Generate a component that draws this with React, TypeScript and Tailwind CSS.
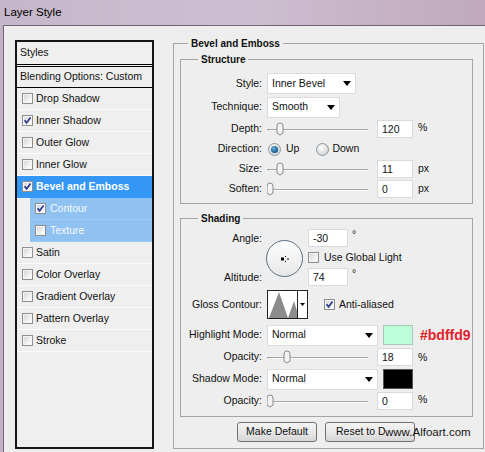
import React from 'react';

const Check: React.FC<{ checked?: boolean }> = ({ checked }) => (
    <svg width="11" height="11" viewBox="0 0 11 11" className="shrink-0">
        <defs>
            <linearGradient id="cbg" x1="0" y1="0" x2="1" y2="1">
                <stop offset="0" stopColor="#d8d8d8" />
                <stop offset="1" stopColor="#ffffff" />
            </linearGradient>
        </defs>
        <rect x="0.5" y="0.5" width="10" height="10" fill="#f4f4f4" stroke="#8e8f8f" />
        <rect x="2" y="2" width="7" height="7" fill="url(#cbg)" />
        {checked && <path d="M2.6 5.2 L4.6 7.8 L8.6 2.6" stroke="#2c3a92" strokeWidth="1.7" fill="none" />}
    </svg>
);

const Radio: React.FC<{ on?: boolean }> = ({ on }) => (
    <svg width="13" height="13" viewBox="0 0 13 13" className="shrink-0">
        <defs>
            <radialGradient id="rdo" cx="0.4" cy="0.35" r="0.7">
                <stop offset="0" stopColor="#ffffff" />
                <stop offset="1" stopColor="#cfcfcf" />
            </radialGradient>
            <radialGradient id="rdi" cx="0.4" cy="0.35" r="0.7">
                <stop offset="0" stopColor="#5fb0de" />
                <stop offset="1" stopColor="#114e80" />
            </radialGradient>
        </defs>
        <circle cx="6.5" cy="6.5" r="6" fill="url(#rdo)" stroke="#8a98a6" />
        {on && <circle cx="6.5" cy="6.5" r="3.6" fill="url(#rdi)" />}
    </svg>
);

const Slider: React.FC<{ pos: number }> = ({ pos }) => (
    <svg width="104" height="16" viewBox="0 0 104 16" className="shrink-0">
        <line x1="0" y1="8.5" x2="3" y2="8.5" stroke="#9a9a9a" />
        <line x1="3" y1="8.5" x2="101" y2="8.5" stroke="#a8a8a8" />
        <line x1="3" y1="9.5" x2="101" y2="9.5" stroke="#ffffff" />
        <path
            d={`M${pos - 3} 5 Q${pos - 3} 2 ${pos} 2 Q${pos + 3} 2 ${pos + 3} 5 L${pos + 3} 12 L${pos} 14 L${pos - 3} 12 Z`}
            fill="#f3f3f3"
            stroke="#8a8a8a"
        />
    </svg>
);

const Field: React.FC<{ value: string; w?: string }> = ({ value, w = 'w-[36px]' }) => (
    <div className={`${w} h-[18px] bg-white border border-[#dadada] pl-[4px] leading-[16px] shrink-0`}>{value}</div>
);

const Select: React.FC<{ value: string; w: string }> = ({ value, w }) => (
    <div className={`${w} h-[21px] bg-white border border-[#dcdcdc] flex items-center pl-[4px] pr-[4px] shrink-0`}>
        <span className="flex-1">{value}</span>
        <svg width="8" height="5" viewBox="0 0 8 5"><path d="M0 0 H8 L4 5 Z" fill="#000" /></svg>
    </div>
);

const Row: React.FC<{ label: string; h: string; children: React.ReactNode; className?: string }> = ({ label, h, children, className = '' }) => (
    <div className={`flex items-center ${h} ${className}`}>
        <span className="w-[81px] text-right shrink-0">{label}</span>
        <div className="ml-[5px] flex items-center">{children}</div>
    </div>
);

const Group: React.FC<{ title: string; className?: string; legend: string; children: React.ReactNode }> = ({ title, className = '', legend, children }) => (
    <fieldset className={`border border-[#a5a5a5] ${className}`}>
        <legend className={`${legend} px-[3px] font-bold text-[10px] leading-[13px]`}>{title}</legend>
        {children}
    </fieldset>
);

const styles: { label: string; checked?: boolean; sel?: boolean; sub?: boolean }[] = [
    { label: 'Drop Shadow' },
    { label: 'Inner Shadow', checked: true },
    { label: 'Outer Glow' },
    { label: 'Inner Glow' },
    { label: 'Bevel and Emboss', checked: true, sel: true },
    { label: 'Contour', checked: true, sub: true },
    { label: 'Texture', sub: true },
    { label: 'Satin' },
    { label: 'Color Overlay' },
    { label: 'Gradient Overlay' },
    { label: 'Pattern Overlay' },
    { label: 'Stroke' },
];

const App: React.FC = () => {
    return (
        <div className="w-[485px] h-[452px] overflow-hidden bg-gradient-to-r from-[#c3b1c6] via-[#bcaac3] to-[#c8afc0] font-['Liberation_Sans',Arial,sans-serif] text-[10.5px] text-[#111]">
            <div className="h-[25px] pl-[4px] flex items-center text-[11.5px] text-black bg-gradient-to-r from-[#c6b6c9] via-[#cdbfd1] to-[#c1a8bd]">
                Layer Style
            </div>
            <div className="ml-[3px] h-[427px] border-l border-t border-[#6f6670] bg-[#eeeeee] flex">
                {/* styles list */}
                <div className="ml-[11px] mt-[14px] w-[139px] h-[409px] border-2 border-[#151515] bg-[#efefef] shrink-0">
                    <div className="h-[25px] pl-[3px] flex items-center border-b-[3px] border-double border-black">Styles</div>
                    <div className="h-[21px] pl-[3px] flex items-center border-b border-black">Blending Options: Custom</div>
                    {styles.map((s) =>
                        s.sub ? (
                            <div key={s.label} className="h-[22px] pl-[13px] flex">
                                <div className="flex-1 flex items-center gap-[4px] pl-[5px] bg-[#8fc1f1] text-[#f4f9ff] border-b border-[#9cc8f2]">
                                    <Check checked={s.checked} />
                                    <span>{s.label}</span>
                                </div>
                            </div>
                        ) : (
                            <div
                                key={s.label}
                                className={`h-[22px] pl-[5px] flex items-center gap-[3px] border-b ${s.sel ? 'bg-[#3497f5] text-white font-bold border-[#3497f5]' : 'border-[#fbfbfb]'}`}
                            >
                                <Check checked={s.checked} />
                                <span>{s.label}</span>
                            </div>
                        )
                    )}
                </div>

                {/* settings */}
                <Group title="Bevel and Emboss" legend="ml-[8px]" className="ml-[19px] mt-[11px] w-[311px] h-[412px] pl-[6px] pr-[10px] shrink-0">
                    <Group title="Structure" legend="ml-[17px]" className="mt-[3px] w-[293px] pb-[4px]">
                        <div className="pt-[6px]">
                            <Row label="Style:" h="h-[23px]">
                                <Select value="Inner Bevel" w="w-[89px]" />
                            </Row>
                            <Row label="Technique:" h="h-[24px]">
                                <Select value="Smooth" w="w-[73px]" />
                            </Row>
                            <Row label="Depth:" h="h-[20px]">
                                <Slider pos={13} />
                                <div className="ml-[6px]"><Field value="120" /></div>
                                <span className="ml-[5px] self-start">%</span>
                            </Row>
                            <Row label="Direction:" h="h-[20px]">
                                <div className="ml-[1px] flex items-center gap-[5px]">
                                    <Radio on />
                                    <span>Up</span>
                                </div>
                                <div className="ml-[17px] flex items-center gap-[3px]">
                                    <Radio />
                                    <span>Down</span>
                                </div>
                            </Row>
                            <Row label="Size:" h="h-[20px]">
                                <Slider pos={13} />
                                <div className="ml-[6px]"><Field value="11" /></div>
                                <span className="ml-[5px]">px</span>
                            </Row>
                            <Row label="Soften:" h="h-[20px]">
                                <Slider pos={3} />
                                <div className="ml-[6px]"><Field value="0" /></div>
                                <span className="ml-[5px]">px</span>
                            </Row>
                        </div>
                    </Group>

                    <Group title="Shading" legend="ml-[17px]" className="mt-[8px] w-[293px] pb-[5px]">
                        <div className="flex mt-[4px]">
                            <div className="w-[81px] h-[57px] flex flex-col justify-between text-right shrink-0">
                                <span className="leading-[18px]">Angle:</span>
                                <span className="leading-[18px]">Altitude:</span>
                            </div>
                            <div className="ml-[4px] self-center mt-[2px] w-[37px] h-[37px] rounded-full border-[1.5px] border-[#5d6d7e] bg-gradient-to-b from-[#ffffff] to-[#e6e6e6] flex items-center justify-center">
                                <svg width="8" height="6" viewBox="0 0 8 6">
                                    <rect x="0" y="1.5" width="3" height="3" fill="#000" />
                                    <rect x="4" y="0" width="1" height="1" fill="#000" />
                                    <rect x="4" y="5" width="1" height="1" fill="#000" />
                                    <rect x="6" y="2.5" width="2" height="1" fill="#000" />
                                </svg>
                            </div>
                            <div className="ml-[5px] flex flex-col">
                                <div className="flex h-[18px]">
                                    <Field value="-30" w="w-[40px]" />
                                    <span className="ml-[4px] leading-[10px]">°</span>
                                </div>
                                <div className="flex items-center h-[21px] gap-[5px]">
                                    <Check />
                                    <span>Use Global Light</span>
                                </div>
                                <div className="flex h-[18px]">
                                    <Field value="74" w="w-[40px]" />
                                    <span className="ml-[4px] leading-[10px]">°</span>
                                </div>
                            </div>
                        </div>

                        <Row label="Gloss Contour:" h="h-[29px]" className="mt-[4px]">
                            <div className="flex h-[29px] border border-[#222] bg-white">
                                <svg width="29" height="27" viewBox="0 0 29 27">
                                    <path d="M1 27 L11 1 L20 27 Z M20 27 L26 10 L29 20 L29 27 Z" fill="#8c8c8c" />
                                </svg>
                                <div className="w-[10px] border-l border-[#222] flex items-center justify-center">
                                    <svg width="5" height="3" viewBox="0 0 5 3"><path d="M0 0 H5 L2.5 3 Z" fill="#000" /></svg>
                                </div>
                            </div>
                            <div className="ml-[16px] flex items-center gap-[4px]">
                                <Check checked />
                                <span>Anti-aliased</span>
                            </div>
                        </Row>

                        <Row label="Highlight Mode:" h="h-[22px]" className="mt-[5px]">
                            <Select value="Normal" w="w-[111px]" />
                            <div className="ml-[5px] w-[30px] h-[20px] bg-[#bdffd9] border border-[#a8c8b4]" />
                            <span className="ml-[7px] text-[14px] font-bold text-[#e1232c]">#bdffd9</span>
                        </Row>
                        <Row label="Opacity:" h="h-[22px]">
                            <Slider pos={20} />
                            <div className="ml-[6px]"><Field value="18" /></div>
                            <span className="ml-[5px] self-start mt-[2px]">%</span>
                        </Row>
                        <Row label="Shadow Mode:" h="h-[22px]">
                            <Select value="Normal" w="w-[111px]" />
                            <div className="ml-[5px] w-[30px] h-[20px] bg-black border border-[#555]" />
                        </Row>
                        <Row label="Opacity:" h="h-[21px]">
                            <Slider pos={3} />
                            <div className="ml-[6px]"><Field value="0" /></div>
                            <span className="ml-[5px] self-start">%</span>
                        </Row>
                    </Group>

                    <div className="relative mt-[5px] ml-[57px] flex gap-[8px]">
                        <button className="w-[80px] h-[20px] rounded-[3px] border border-[#707070] bg-gradient-to-b from-[#f4f4f4] via-[#e8e8e8] to-[#d6d6d6] text-[10.5px]">
                            Make Default
                        </button>
                        <button className="w-[90px] h-[20px] rounded-[3px] border border-[#707070] bg-gradient-to-b from-[#f4f4f4] via-[#e8e8e8] to-[#d6d6d6] text-[10.5px] pl-[10px] text-left">
                            <span className="block w-[49px] overflow-hidden whitespace-nowrap">Reset to Default</span>
                        </button>
                        <span className="absolute left-[148px] top-[3px] leading-[14px] text-[11.5px] text-[#151515]">
                            www.Alfoart.com
                        </span>
                    </div>
                </Group>
            </div>
        </div>
    );
};

export default App;
